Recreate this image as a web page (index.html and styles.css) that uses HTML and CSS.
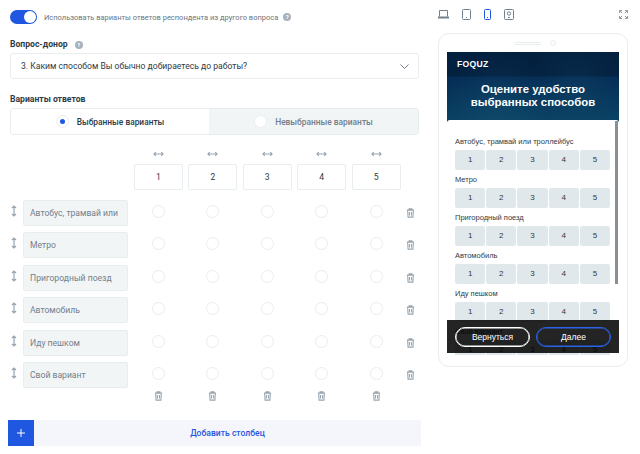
FILE: index.html
```html
<!DOCTYPE html>
<html>
<head>
	<meta charset="UTF-8">
	<title>Варианты ответов</title>
	<link rel="stylesheet" href="styles.css">
</head>

<body>
	<svg class="sprite" width="0" height="0">
		<symbol id="trash" viewBox="0 0 12 14">
			<path d="M1 3h10M4 3V1.200h4V3M2 3l.6 9.800h6.800L10 3M4.600 5.500v5M7.400 5.500v5" fill="none" stroke="currentColor" stroke-width="1.500"/>
		</symbol>
		<symbol id="hsize" viewBox="0 0 12 6">
			<path d="M1 3h10M3 1L1 3l2 2M9 1l2 2-2 2" fill="none" stroke="currentColor" stroke-width="1.200"/>
		</symbol>
		<symbol id="vsize" viewBox="0 0 6 12">
			<path d="M3 1v10M1 3l2-2 2 2M1 9l2 2 2-2" fill="none" stroke="currentColor" stroke-width="1.200"/>
		</symbol>
	</svg>

	<div class="page">
		<div class="editor">
			<div class="switch-row">
				<span class="switch"><span class="knob"></span></span>
				<span class="switch-text">Использовать варианты ответов респондента из другого вопроса</span>
				<span class="hint">?</span>
			</div>

			<div class="label donor-label">Вопрос-донор <span class="hint">?</span></div>
			<div class="select">
				<span>3. Каким способом Вы обычно добираетесь до работы?</span>
				<svg width="9" height="5" viewBox="0 0 9 5"><path d="M.5.500l4 4 4-4" fill="none" stroke="#73808d" stroke-width="1"/></svg>
			</div>

			<div class="label answers-label">Варианты ответов</div>
			<div class="tabs">
				<div class="tab active"><span class="tab-radio"></span>Выбранные варианты</div>
				<div class="tab"><span class="tab-radio empty"></span>Невыбранные варианты</div>
			</div>

			<div class="matrix">
				<div class="cell"></div>
				<div class="col-head"><svg class="arrow-h"><use href="#hsize"/></svg><div class="col-box">1</div></div>
				<div class="col-head"><svg class="arrow-h"><use href="#hsize"/></svg><div class="col-box">2</div></div>
				<div class="col-head"><svg class="arrow-h"><use href="#hsize"/></svg><div class="col-box">3</div></div>
				<div class="col-head"><svg class="arrow-h"><use href="#hsize"/></svg><div class="col-box">4</div></div>
				<div class="col-head"><svg class="arrow-h"><use href="#hsize"/></svg><div class="col-box">5</div></div>
				<div class="cell"></div>

				<div class="row-name"><svg class="arrow-v"><use href="#vsize"/></svg><div class="name-box">Автобус, трамвай или</div></div>
				<div class="cell"><span class="radio"></span></div>
				<div class="cell"><span class="radio"></span></div>
				<div class="cell"><span class="radio"></span></div>
				<div class="cell"><span class="radio"></span></div>
				<div class="cell"><span class="radio"></span></div>
				<div class="cell"><svg class="trash"><use href="#trash"/></svg></div>

				<div class="row-name"><svg class="arrow-v"><use href="#vsize"/></svg><div class="name-box">Метро</div></div>
				<div class="cell"><span class="radio"></span></div>
				<div class="cell"><span class="radio"></span></div>
				<div class="cell"><span class="radio"></span></div>
				<div class="cell"><span class="radio"></span></div>
				<div class="cell"><span class="radio"></span></div>
				<div class="cell"><svg class="trash"><use href="#trash"/></svg></div>

				<div class="row-name"><svg class="arrow-v"><use href="#vsize"/></svg><div class="name-box">Пригородный поезд</div></div>
				<div class="cell"><span class="radio"></span></div>
				<div class="cell"><span class="radio"></span></div>
				<div class="cell"><span class="radio"></span></div>
				<div class="cell"><span class="radio"></span></div>
				<div class="cell"><span class="radio"></span></div>
				<div class="cell"><svg class="trash"><use href="#trash"/></svg></div>

				<div class="row-name"><svg class="arrow-v"><use href="#vsize"/></svg><div class="name-box">Автомобиль</div></div>
				<div class="cell"><span class="radio"></span></div>
				<div class="cell"><span class="radio"></span></div>
				<div class="cell"><span class="radio"></span></div>
				<div class="cell"><span class="radio"></span></div>
				<div class="cell"><span class="radio"></span></div>
				<div class="cell"><svg class="trash"><use href="#trash"/></svg></div>

				<div class="row-name"><svg class="arrow-v"><use href="#vsize"/></svg><div class="name-box">Иду пешком</div></div>
				<div class="cell"><span class="radio"></span></div>
				<div class="cell"><span class="radio"></span></div>
				<div class="cell"><span class="radio"></span></div>
				<div class="cell"><span class="radio"></span></div>
				<div class="cell"><span class="radio"></span></div>
				<div class="cell"><svg class="trash"><use href="#trash"/></svg></div>

				<div class="row-name"><svg class="arrow-v"><use href="#vsize"/></svg><div class="name-box">Свой вариант</div></div>
				<div class="cell"><span class="radio"></span></div>
				<div class="cell"><span class="radio"></span></div>
				<div class="cell"><span class="radio"></span></div>
				<div class="cell"><span class="radio"></span></div>
				<div class="cell"><span class="radio"></span></div>
				<div class="cell"><svg class="trash"><use href="#trash"/></svg></div>

				<div class="cell"></div>
				<div class="cell foot"><svg class="trash"><use href="#trash"/></svg></div>
				<div class="cell foot"><svg class="trash"><use href="#trash"/></svg></div>
				<div class="cell foot"><svg class="trash"><use href="#trash"/></svg></div>
				<div class="cell foot"><svg class="trash"><use href="#trash"/></svg></div>
				<div class="cell foot"><svg class="trash"><use href="#trash"/></svg></div>
				<div class="cell"></div>
			</div>

			<div class="add-row">
				<div class="add-plus"><svg width="8" height="8" viewBox="0 0 8 8"><path d="M4 0v8M0 4h8" stroke="#fff" stroke-width="1"/></svg></div>
				<div class="add-text">Добавить столбец</div>
			</div>
		</div>

		<div class="preview">
			<div class="devices">
				<div class="device-list">
					<svg width="11" height="9" viewBox="0 0 11 9"><path d="M1.500 6.500v-6h8v6" fill="none" stroke="#73808d"/><path d="M0 6.500h11V8.500H0z" fill="#73808d"/></svg>
					<svg width="9" height="11" viewBox="0 0 9 11"><rect x=".5" y=".5" width="8" height="10" rx="1" fill="none" stroke="#73808d"/><path d="M4 8.500h1" stroke="#73808d"/></svg>
					<svg width="7" height="11" viewBox="0 0 7 11"><rect x=".5" y=".5" width="6" height="10" rx="1" fill="none" stroke="#1f57e0"/><path d="M3 8.500h1" stroke="#1f57e0"/></svg>
					<svg width="10" height="11" viewBox="0 0 10 11"><rect x=".5" y=".5" width="9" height="10" rx="1" fill="none" stroke="#73808d"/><circle cx="5" cy="4.500" r="1.700" fill="none" stroke="#73808d"/><path d="M4 8.500h2" stroke="#73808d"/></svg>
				</div>
				<svg width="9" height="9" viewBox="0 0 9 9"><path d="M.5 3V.5H3M6 .5h2.500V3M8.500 6v2.500H6M3 8.500H.5V6M1 1l2 2M8 1L6 3M8 8L6 6M1 8l2-2" fill="none" stroke="#73808d" stroke-width=".8"/></svg>
			</div>

			<div class="phone">
				<div class="phone-top"><span class="speaker"></span><span class="camera"></span></div>
				<div class="screen">
					<div class="screen-head">
						<div class="logo">FOQUZ</div>
						<div class="screen-title">Оцените удобство выбранных способов</div>
					</div>
					<div class="card">
						<div class="q-label">Автобус, трамвай или троллейбус</div>
						<div class="scale"><span>1</span><span>2</span><span>3</span><span>4</span><span>5</span></div>
						<div class="q-label">Метро</div>
						<div class="scale"><span>1</span><span>2</span><span>3</span><span>4</span><span>5</span></div>
						<div class="q-label">Пригородный поезд</div>
						<div class="scale"><span>1</span><span>2</span><span>3</span><span>4</span><span>5</span></div>
						<div class="q-label">Автомобиль</div>
						<div class="scale"><span>1</span><span>2</span><span>3</span><span>4</span><span>5</span></div>
						<div class="q-label">Иду пешком</div>
						<div class="scale"><span>1</span><span>2</span><span>3</span><span>4</span><span>5</span></div>
						<div class="q-label">Свой вариант</div>
						<div class="scale"><span>1</span><span>2</span><span>3</span><span>4</span><span>5</span></div>
					</div>
					<div class="scrollbar"></div>
					<div class="screen-foot">
						<div class="btn btn-back">Вернуться</div>
						<div class="btn btn-next">Далее</div>
					</div>
				</div>
			</div>
		</div>
	</div>
</body>
</html>
```

FILE: styles.css
```css
*
{
	margin: 0;
	padding: 0;
	box-sizing: border-box;
}
html, body
{
	height: 100%;
	overflow: hidden;
	background: #fff;
}
body
{
	font-family: Roboto, "Liberation Sans", sans-serif;
	color: #2e3a46;
}
.sprite
{
	display: block;
	position: absolute;
}
.page
{
	display: flex;
	height: 454px;
}

/* left column */
.editor
{
	width: 430px;
	padding: 10px 9px 0 8px;
}
.switch-row
{
	display: flex;
	align-items: center;
	height: 14px;
	padding-left: 2px;
}
.switch
{
	width: 27px;
	height: 14px;
	border-radius: 7px;
	background: #1f57e0;
	padding: 1px;
	display: flex;
	justify-content: flex-end;
}
.knob
{
	width: 12px;
	height: 12px;
	border-radius: 50%;
	background: #fff;
}
.switch-text
{
	font-size: 7.500px;
	color: #6a7682;
	margin: 0 5px 0 7px;
	white-space: nowrap;
}
.hint
{
	display: inline-flex;
	align-items: center;
	justify-content: center;
	width: 8px;
	height: 8px;
	border-radius: 50%;
	background: #a6b1bc;
	color: #fff;
	font-size: 6px;
	font-weight: 700;
	line-height: 8px;
}
.label
{
	font-size: 8.600px;
	font-weight: 700;
	color: #2e3a46;
	line-height: 14px;
	padding-left: 2px;
}
.label .hint
{
	margin-left: 5px;
}
.donor-label
{
	margin-top: 13px;
}
.select
{
	display: flex;
	align-items: center;
	justify-content: space-between;
	height: 26px;
	margin: 2px 0 0 2px;
	width: 409px;
	padding: 0 9px 0 10px;
	border: 1px solid #e8edf0;
	border-radius: 3px;
	font-size: 8.600px;
	color: #2e3a46;
}
.answers-label
{
	margin-top: 13px;
}
.tabs
{
	display: flex;
	width: 409px;
	height: 27px;
	margin: 2px 0 0 2px;
	border: 1px solid #e8edf0;
	border-radius: 3px;
	overflow: hidden;
}
.tab
{
	flex: 1;
	display: flex;
	align-items: center;
	justify-content: center;
	font-size: 8.400px;
	font-weight: 500;
	background: #f1f5f6;
	color: #73808d;
}
.tab.active
{
	flex: 0 0 198px;
	background: #fff;
	color: #2e3a46;
}
.tab-radio
{
	width: 13px;
	height: 13px;
	border-radius: 50%;
	background: #fff;
	border: 1px solid #e8edf0;
	margin-right: 8px;
	display: flex;
	align-items: center;
	justify-content: center;
}
.tab-radio::after
{
	content: "";
	width: 5px;
	height: 5px;
	border-radius: 50%;
	background: #1f57e0;
}
.tab-radio.empty::after
{
	display: none;
}

/* matrix of rows and columns */
.matrix
{
	display: grid;
	grid-template-columns: 123.300px repeat(5, 54.400px) 14px;
	grid-template-rows: 49px repeat(6, 32.400px) 25.600px;
	margin-top: 16px;
}
.cell
{
	display: flex;
	align-items: flex-start;
	justify-content: center;
	padding-top: 5px;
}
.cell.foot
{
	padding-top: 0;
}
.col-head
{
	display: flex;
	flex-direction: column;
	align-items: center;
}
.arrow-h
{
	width: 11px;
	height: 6px;
	color: #98a5b0;
}
.col-box
{
	width: 49px;
	height: 26px;
	margin-top: 7px;
	border: 1px solid #e8edf0;
	border-radius: 2px;
	font-size: 8.600px;
	display: flex;
	align-items: center;
	justify-content: center;
}
.row-name
{
	display: flex;
	align-items: flex-start;
	padding-left: 3px;
}
.arrow-v
{
	width: 6px;
	height: 12px;
	color: #98a5b0;
	margin: 5px 6px 0 0;
}
.name-box
{
	width: 105px;
	height: 26px;
	background: #f1f5f6;
	border: 1px solid #e8edf0;
	border-radius: 2px;
	font-size: 8.600px;
	color: #73808d;
	line-height: 24px;
	padding-left: 6px;
	white-space: nowrap;
	overflow: hidden;
}
.radio
{
	width: 13px;
	height: 13px;
	border-radius: 50%;
	border: 1px solid #e8edf0;
}
.trash
{
	width: 9px;
	height: 10px;
	color: #98a5b0;
	margin-top: 3px;
}
.foot .trash
{
	margin-top: -3px;
}
.add-row
{
	display: flex;
	height: 26px;
	width: 413px;
}
.add-plus
{
	width: 26px;
	background: #1f57e0;
	display: flex;
	align-items: center;
	justify-content: center;
}
.add-text
{
	flex: 1;
	background: #f5f6fb;
	color: #1f57e0;
	font-size: 8.600px;
	font-weight: 500;
	display: flex;
	align-items: center;
	justify-content: center;
}

/* right column */
.preview
{
	width: 210px;
	padding: 9px 9px 0 8px;
}
.devices
{
	display: flex;
	align-items: center;
	justify-content: space-between;
	height: 11px;
	padding-right: 3px;
	margin-bottom: 13px;
}
.device-list
{
	display: flex;
	align-items: center;
	gap: 13px;
}
.phone
{
	width: 190px;
	height: 334px;
	border: 1px solid #e8edf0;
	border-radius: 11px;
	padding: 0 8px;
}
.phone-top
{
	height: 18px;
	display: flex;
	align-items: center;
	justify-content: center;
	gap: 9px;
	padding-left: 4px;
}
.speaker
{
	width: 27px;
	height: 3px;
	border: 1px solid #e8edf0;
	border-radius: 2px;
}
.camera
{
	width: 6px;
	height: 6px;
	border: 1px solid #e8edf0;
	border-radius: 50%;
}
.screen
{
	position: relative;
	width: 172px;
	height: 303px;
	overflow: hidden;
	background:
		radial-gradient(circle at 30% 16%, rgba(40, 110, 140, .18), transparent 18%),
		radial-gradient(circle at 75% 10%, rgba(40, 110, 140, .14), transparent 16%),
		linear-gradient(180deg, #03203f 0, #03203f 24px, #052c54 25px, #0a4264 68px);
}
.screen-head
{
	height: 68px;
	color: #fff;
	text-align: center;
}
.logo
{
	font-family: "Liberation Sans", sans-serif;
	font-size: 8.600px;
	font-weight: 700;
	letter-spacing: .3px;
	line-height: 10px;
	text-align: left;
	padding: 7px 0 0 10px;
	height: 31px;
}
.screen-title
{
	font-family: "Liberation Sans", sans-serif;
	font-size: 11.400px;
	font-weight: 700;
	line-height: 13px;
	padding: 0 20px;
}
.card
{
	width: 172px;
	height: 235px;
	background: #fff;
	border-radius: 3px 3px 0 0;
	padding: 16px 8px 0;
	font-family: "Liberation Sans", sans-serif;
	overflow: hidden;
}
.q-label
{
	font-size: 7.500px;
	line-height: 11px;
	color: #2e3a46;
	margin-bottom: 3px;
}
.scale
{
	display: flex;
	gap: 1px;
	width: 155px;
	margin-bottom: 4px;
}
.scale span
{
	flex: 1;
	height: 20px;
	border-radius: 2px;
	background: #e1e8eb;
	font-size: 8px;
	line-height: 20px;
	text-align: center;
}
.scrollbar
{
	position: absolute;
	left: 168px;
	top: 69px;
	width: 3px;
	height: 163px;
	background: #8a8f94;
}
.screen-foot
{
	position: absolute;
	left: 0;
	right: 0;
	top: 268px;
	height: 33px;
	background: rgba(0, 0, 0, .86);
	display: flex;
	align-items: center;
	gap: 6px;
	padding: 0 8px;
}
.btn
{
	width: 75px;
	height: 20px;
	border-radius: 10px;
	border: 1px solid #fff;
	box-shadow: inset 0 0 0 .5px #fff;
	color: #fff;
	font-family: "Liberation Sans", sans-serif;
	font-size: 8.500px;
	line-height: 18px;
	text-align: center;
}
.btn-next
{
	border-color: #2a62e8;
	box-shadow: inset 0 0 0 .5px #2a62e8;
}
```
